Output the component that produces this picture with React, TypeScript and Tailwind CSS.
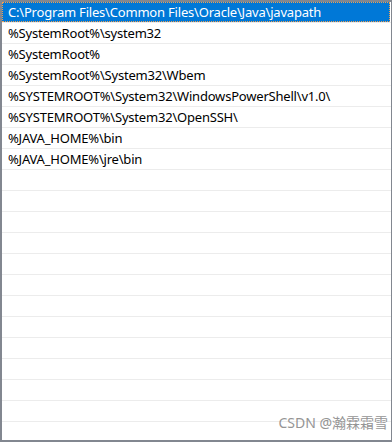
import React from "react";

const items = [
  "C:\\Program Files\\Common Files\\Oracle\\Java\\javapath",
  "%SystemRoot%\\system32",
  "%SystemRoot%",
  "%SystemRoot%\\System32\\Wbem",
  "%SYSTEMROOT%\\System32\\WindowsPowerShell\\v1.0\\",
  "%SYSTEMROOT%\\System32\\OpenSSH\\",
  "%JAVA_HOME%\\bin",
  "%JAVA_HOME%\\jre\\bin",
];

export default function App() {
  const rows = Array.from({ length: 22 }, (_, i) => items[i] ?? "");
  return (
    <div
      className="relative w-[392px] h-[442px] overflow-hidden bg-white border-l-2 border-t-2 border-b-2 border-r border-[#828790]"
      style={{ fontFamily: '"Noto Sans", "Noto Sans CJK SC", sans-serif' }}
    >
      <div className="flex flex-col">
        {rows.map((t, i) => (
          <div key={i} className="h-[21px] border-b border-[#ececec] shrink-0">
            {i === 0 ? (
              <div className="h-[20px] mr-px bg-[#0078d7] outline outline-1 outline-dotted outline-[#f0a050] -outline-offset-1 pl-[6px] text-[13px] tracking-[-0.2px] leading-[20px] text-white whitespace-nowrap">
                {t}
              </div>
            ) : (
              <div className="h-[20px] pl-[6px] text-[13px] tracking-[-0.2px] leading-[20px] text-black whitespace-nowrap">
                {t}
              </div>
            )}
          </div>
        ))}
      </div>
      <div className="absolute right-[3px] bottom-[8px] text-[14px] leading-[18px] text-[#8a8a8a] opacity-90 whitespace-nowrap">
        CSDN @瀚霖霜雪
      </div>
    </div>
  );
}
